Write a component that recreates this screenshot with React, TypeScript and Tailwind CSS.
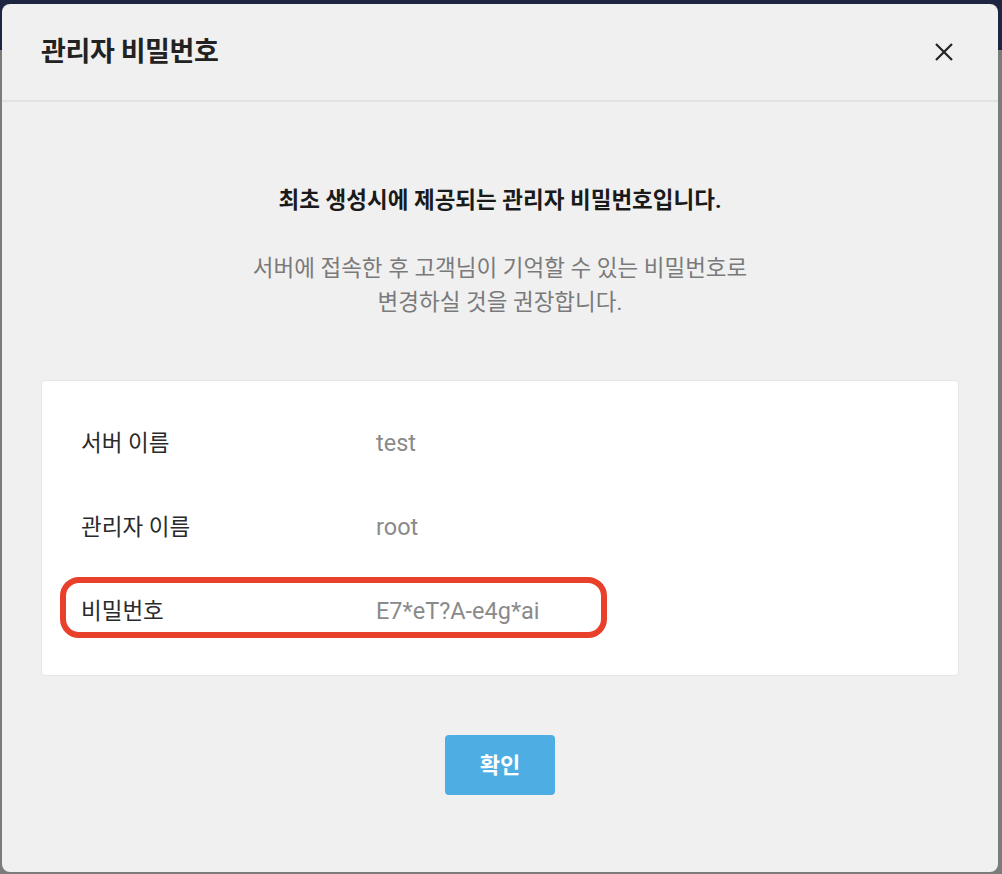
import React from "react";

export default function App() {
  return (
    <div
      className="relative h-[874px] w-[1002px] overflow-hidden bg-[#7b7b7b]"
      style={{ fontFamily: "Roboto, 'Noto Sans CJK KR', sans-serif" }}
    >
      <div className="h-[50px] bg-[#1e2540]" />
      <div className="absolute left-[2px] top-[4px] flex h-[868px] w-[996px] flex-col rounded-[8px] bg-[#f0f0f0]">
        <div className="flex h-[98px] shrink-0 items-center justify-between border-b-2 border-[#e2e2e2] pl-[39px] pr-[42px]">
          <h1 className="text-[27px] font-bold tracking-[-0.4px] text-[#222]">관리자 비밀번호</h1>
          <button className="flex h-[24px] w-[24px] items-center justify-center text-[#222]">
            <svg width="20" height="20" viewBox="0 0 20 20" fill="none" stroke="currentColor" strokeWidth="2.2">
              <path d="M2 2 L18 18 M18 2 L2 18" />
            </svg>
          </button>
        </div>
        <div className="flex flex-col items-center pt-[83px]">
          <p className="text-[22.5px] font-bold leading-[30px] text-[#1a1a1a]">
            최초 생성시에 제공되는 관리자 비밀번호입니다.
          </p>
          <p className="mt-[36px] text-center text-[22.5px] leading-[34px] text-[#7a7a7a]">
            서버에 접속한 후 고객님이 기억할 수 있는 비밀번호로
            <br />
            변경하실 것을 권장합니다.
          </p>
        </div>
        <div className="relative mx-[39px] mt-[61px] rounded-[4px] border border-[#e6e6e6] bg-white pb-[21px] pl-[39px] pt-[21px]">
          {[
            ["서버 이름", "test"],
            ["관리자 이름", "root"],
            ["비밀번호", "E7*eT?A-e4g*ai"],
          ].map(([label, value]) => (
            <div key={label} className="flex h-[84px] items-center">
              <span className="w-[295px] shrink-0 text-[22.5px] text-[#2a2a2a]">{label}</span>
              <span className="text-[23.5px] text-[#8a8a8a]">{value}</span>
            </div>
          ))}
          <div className="pointer-events-none absolute left-[18px] top-[196px] h-[61px] w-[547px] rounded-[19px] border-[6px] border-[#e8402a]" />
        </div>
        <div className="flex justify-center pt-[59px]">
          <button className="h-[60px] w-[110px] rounded-[4px] bg-[#4eaee4] text-[22px] font-bold text-white">
            확인
          </button>
        </div>
      </div>
    </div>
  );
}
